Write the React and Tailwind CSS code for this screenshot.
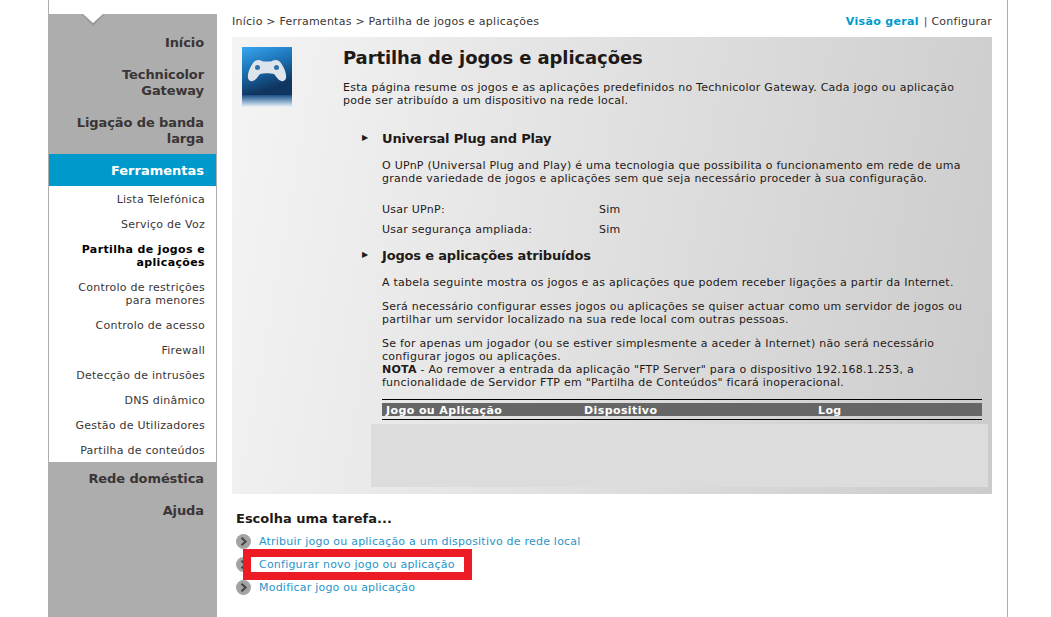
import React from 'react';

const topMenu = [
  ['Início'],
  ['Technicolor', 'Gateway'],
  ['Ligação de banda', 'larga'],
];

const subMenu = [
  { lines: ['Lista Telefónica'] },
  { lines: ['Serviço de Voz'] },
  { lines: ['Partilha de jogos e', 'aplicações'], active: true },
  { lines: ['Controlo de restrições', 'para menores'] },
  { lines: ['Controlo de acesso'] },
  { lines: ['Firewall'] },
  { lines: ['Detecção de intrusões'] },
  { lines: ['DNS dinâmico'] },
  { lines: ['Gestão de Utilizadores'] },
  { lines: ['Partilha de conteúdos'] },
];

function Arrow() {
  return (
    <svg width="15" height="15" viewBox="0 0 15 15" className="shrink-0">
      <circle cx="7.5" cy="7.5" r="7.5" fill="#a3a3a3" />
      <path d="M5.5 3.8 L9.6 7.5 L5.5 11.2" fill="none" stroke="#444" strokeWidth="2" />
    </svg>
  );
}

function GameIcon() {
  return (
    <svg width="50" height="60" viewBox="0 0 50 60" className="shrink-0">
      <defs>
        <linearGradient id="azul" x1="0" y1="0" x2="0.35" y2="1">
          <stop offset="0" stopColor="#38a6f2" />
          <stop offset="0.5" stopColor="#1a6fb0" />
          <stop offset="0.95" stopColor="#0f3560" />
        </linearGradient>
        <linearGradient id="fade" x1="0" y1="0" x2="0" y2="1">
          <stop offset="0" stopColor="#1c4f85" />
          <stop offset="0.5" stopColor="#7fa3c8" />
          <stop offset="1" stopColor="#eef3f8" />
        </linearGradient>
      </defs>
      <rect width="50" height="48" fill="url(#azul)" />
      <rect y="48" width="50" height="12" fill="url(#fade)" />
      <path
        d="M13 14 C16 12 19 13 21 14.5 L29 14.5 C31 13 34 12 37 14 C41 17 45 27 44 31 C43 35 39 35 36 32 L32 27 C28 26 22 26 18 27 L14 32 C11 35 7 35 6 31 C5 27 9 17 13 14 Z"
        fill="#dfe3ea"
      />
      <circle cx="15.5" cy="20.5" r="2.5" fill="#2f72aa" />
      <circle cx="34.5" cy="20.5" r="2.5" fill="#2f72aa" />
    </svg>
  );
}

function Heading({ children }) {
  return (
    <div className="flex h-4 items-center text-[13px] font-bold tracking-[-0.17px] text-[#1f1a17]">
      <span className="w-[21px] pl-[1px] text-[8px] leading-none">▶</span>
      {children}
    </div>
  );
}

export default function App() {
  return (
    <div className="h-[617px] overflow-hidden bg-white pl-12 pr-[43px] font-['DejaVu_Sans',sans-serif] text-[11px] leading-[13px] tracking-[0.25px] text-[#1f1a17]">
      <div className="flex h-full border-x border-[#adadad]">
        {/* menu lateral */}
        <div className="mt-[14px] flex w-[168px] shrink-0 flex-col">
          <div className="relative flex flex-col gap-4 bg-[#adadad] pb-[7px] pt-[21px] text-right text-[13px] font-bold leading-4 tracking-[-0.1px] text-[#3a3535]">
            <svg width="24" height="13" viewBox="0 0 24 13" className="absolute left-[32px] top-0">
              <path d="M0 0 L24 0 L12 12 Z" fill="#999999" />
              <path d="M2 0 L22 0 L12 9 Z" fill="#ffffff" />
            </svg>
            {topMenu.map((item) => (
              <div key={item[0]} className="pr-[13px]">
                {item.map((l) => <div key={l}>{l}</div>)}
              </div>
            ))}
          </div>
          <div className="h-8 border-r border-[#adadad] bg-[#0099cc] pr-[12px] text-right text-[13px] font-bold leading-[34px] tracking-normal text-white">Ferramentas</div>
          <div className="flex h-[276px] flex-col gap-3 border-r border-[#adadad] pb-[6px] pr-[11px] pt-[7px] text-right">
            {subMenu.map((item) => (
              <div key={item.lines[0]} className={item.active ? 'font-bold tracking-[0.37px] text-black' : 'text-[#3a3535]'}>
                {item.lines.map((l) => <div key={l}>{l}</div>)}
              </div>
            ))}
          </div>
          <div className="flex-1 bg-[#adadad] pr-[13px] pt-[9px] text-right text-[13px] font-bold leading-4 tracking-[-0.1px] text-[#3a3535]">
            <div>Rede doméstica</div>
            <div className="mt-4">Ajuda</div>
          </div>
        </div>

        {/* conteudo */}
        <div className="ml-[15px] w-[760px] shrink-0">
          <div className="flex h-[37px] items-start justify-between pt-[15px] text-[#3a3535]">
            <div>Início &gt; Ferramentas &gt; Partilha de jogos e aplicações</div>
            <div>
              <span className="mr-[1px] font-bold tracking-[0.35px] text-[#0099cc]">Visão geral</span> <span className="text-[#7b2d7f]">|</span> Configurar
            </div>
          </div>

          <div className="h-[457px] bg-[linear-gradient(100deg,#f4f4f4_0%,#cbcbcb_100%)] pl-[10px] pr-[4px] pt-[10px]">
            <div className="flex">
              <GameIcon />
              <div className="ml-[51px] w-[640px]">
                <h1 className="text-[18px] font-bold leading-[22px] tracking-[-0.1px]">Partilha de jogos e aplicações</h1>
                <p className="mt-[12px]">
                  Esta página resume os jogos e as aplicações predefinidos no Technicolor Gateway. Cada jogo ou aplicação
                  <br />pode ser atribuído a um dispositivo na rede local.
                </p>
              </div>
            </div>

            <div className="ml-[119px] mt-[23px] w-[600px]">
              <Heading>Universal Plug and Play</Heading>
            </div>
            <div className="ml-[140px] w-[600px]">
              <p className="mt-[13px]">
                O UPnP (Universal Plug and Play) é uma tecnologia que possibilita o funcionamento em rede de uma
                <br />grande variedade de jogos e aplicações sem que seja necessário proceder à sua configuração.
              </p>
              <div className="mt-[18px] flex"><span className="w-[217px]">Usar UPnP:</span><span>Sim</span></div>
              <div className="mt-[7px] flex"><span className="w-[217px]">Usar segurança ampliada:</span><span>Sim</span></div>
            </div>

            <div className="ml-[119px] mt-[11px]">
              <Heading>Jogos e aplicações atribuídos</Heading>
            </div>
            <div className="ml-[140px] w-[600px]">
              <p className="mt-[13px]">A tabela seguinte mostra os jogos e as aplicações que podem receber ligações a partir da Internet.</p>
              <p className="mt-[11px]">
                Será necessário configurar esses jogos ou aplicações se quiser actuar como um servidor de jogos ou
                <br />partilhar um servidor localizado na sua rede local com outras pessoas.
              </p>
              <p className="mt-[11px]">
                Se for apenas um jogador (ou se estiver simplesmente a aceder à Internet) não será necessário
                <br />configurar jogos ou aplicações.
                <br /><b>NOTA</b> - Ao remover a entrada da aplicação "FTP Server" para o dispositivo 192.168.1.253, a
                <br />funcionalidade de Servidor FTP em "Partilha de Conteúdos" ficará inoperacional.
              </p>
              <div className="mt-[10px] border-y border-black py-[3px]">
                <div className="flex h-[13px] bg-[#666666] pl-[4px] font-bold leading-[15px] tracking-[0.4px] text-white">
                  <span className="w-[198px]">Jogo ou Aplicação</span>
                  <span className="w-[234px]">Dispositivo</span>
                  <span>Log</span>
                </div>
              </div>
            </div>
            <div className="ml-[129px] mt-[4px] h-[63px] w-[617px] bg-[#dcdcdc]" />
          </div>

          <div className="pl-[4px] pt-[17px]">
            <div className="text-[13px] font-bold leading-4 tracking-normal">Escolha uma tarefa...</div>
            <div className="mt-[7px] flex flex-col gap-2 tracking-[0.22px] text-[#1f96c9]">
              <div className="flex h-[15px] items-center gap-2"><Arrow />Atribuir jogo ou aplicação a um dispositivo de rede local</div>
              <div className="relative flex h-[15px] items-center gap-2">
                <Arrow />
                <div className="absolute left-[7px] top-[-8px] h-[31px] w-[229px] border-8 border-[#ed1c24] bg-white" />
                <span className="relative">Configurar novo jogo ou aplicação</span>
              </div>
              <div className="flex h-[15px] items-center gap-2"><Arrow />Modificar jogo ou aplicação</div>
            </div>
          </div>
        </div>
      </div>
    </div>
  );
}
